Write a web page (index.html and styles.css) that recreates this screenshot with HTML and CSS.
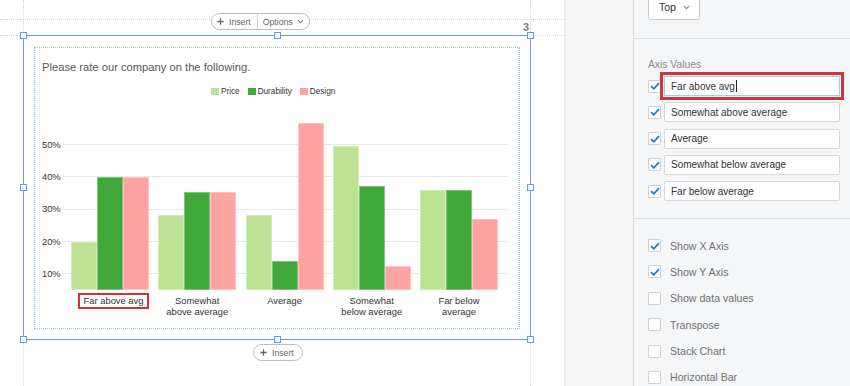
FILE: index.html
```html
<!DOCTYPE html>
<html>
<head>
<meta charset="utf-8">
<title>Chart question editor</title>
<link rel="stylesheet" href="styles.css">
</head>
<body>
<div class="app">
  <div class="canvas">
    <div class="guide guide-h guide-top"></div>
    <div class="guide guide-h guide-block"></div>
    <div class="guide guide-v guide-left"></div>
    <div class="guide guide-v guide-right"></div>

    <div class="toolbar">
      <div class="pill">
        <span class="pill-item pill-first">
          <svg class="plus" width="7" height="7" viewBox="0 0 7 7"><path d="M3.5 0.3V6.7M0.3 3.5H6.7"/></svg>
          Insert
        </span>
        <span class="pill-sep"></span>
        <span class="pill-item pill-last">
          Options
          <svg class="chev" width="7" height="5" viewBox="0 0 7 5"><path d="M1 1.2L3.5 3.7L6 1.2"/></svg>
        </span>
      </div>
    </div>

    <div class="block">
      <span class="handle h-tl"></span>
      <span class="handle h-tc"></span>
      <span class="handle h-tr"></span>
      <span class="handle h-ml"></span>
      <span class="handle h-mr"></span>
      <span class="handle h-bl"></span>
      <span class="handle h-bc"></span>
      <span class="handle h-br"></span>
      <span class="qnum">3</span>

      <div class="question">
        <div class="qtitle">Please rate our company on the following.</div>
        <div class="legend">
          <span class="leg-item"><span class="swatch c-price"></span>Price</span>
          <span class="leg-item"><span class="swatch c-dur"></span>Durability</span>
          <span class="leg-item"><span class="swatch c-design"></span>Design</span>
        </div>
        <div class="chart">
          <div class="grid">
            <div class="grow"><span class="ylabel">50%</span><span class="gline"></span></div>
            <div class="grow"><span class="ylabel">40%</span><span class="gline"></span></div>
            <div class="grow"><span class="ylabel">30%</span><span class="gline"></span></div>
            <div class="grow"><span class="ylabel">20%</span><span class="gline"></span></div>
            <div class="grow"><span class="ylabel">10%</span><span class="gline"></span></div>
          </div>
          <div class="bars">
            <div class="group">
              <span class="bar c-price" style="height:48px"></span>
              <span class="bar c-dur" style="height:113px"></span>
              <span class="bar c-design" style="height:113px"></span>
            </div>
            <div class="group">
              <span class="bar c-price" style="height:75px"></span>
              <span class="bar c-dur" style="height:98px"></span>
              <span class="bar c-design" style="height:98px"></span>
            </div>
            <div class="group">
              <span class="bar c-price" style="height:75px"></span>
              <span class="bar c-dur" style="height:29px"></span>
              <span class="bar c-design" style="height:167px"></span>
            </div>
            <div class="group">
              <span class="bar c-price" style="height:144px"></span>
              <span class="bar c-dur" style="height:104px"></span>
              <span class="bar c-design" style="height:24px"></span>
            </div>
            <div class="group">
              <span class="bar c-price" style="height:100px"></span>
              <span class="bar c-dur" style="height:100px"></span>
              <span class="bar c-design" style="height:71px"></span>
            </div>
          </div>
        </div>
        <div class="xlabels">
          <div class="xlabel"><span class="xlabel-edit">Far above avg</span></div>
          <div class="xlabel">Somewhat<br>above average</div>
          <div class="xlabel">Average</div>
          <div class="xlabel">Somewhat<br>below average</div>
          <div class="xlabel">Far below<br>average</div>
        </div>
      </div>
    </div>

    <div class="bottom-bar">
      <div class="pill">
        <span class="pill-item pill-solo">
          <svg class="plus" width="7" height="7" viewBox="0 0 7 7"><path d="M3.5 0.3V6.7M0.3 3.5H6.7"/></svg>
          Insert
        </span>
      </div>
    </div>
  </div>

  <div class="strip"></div>

  <div class="panel">
    <div class="panel-top">
      <div class="dropdown">
        <span>Top</span>
        <svg class="chev dd-chev" width="7" height="5" viewBox="0 0 7 5"><path d="M1 1.2L3.5 3.7L6 1.2"/></svg>
      </div>
    </div>

    <div class="axis-section">
      <div class="section-label">Axis Values</div>
      <div class="axis-rows">
        <div class="axis-row">
          <span class="cb"><svg width="10" height="8" viewBox="0 0 10 8"><path d="M1 4.2L3.8 6.8L9 1.2"/></svg></span>
          <div class="field focused">Far above avg<span class="caret"></span></div>
        </div>
        <div class="axis-row">
          <span class="cb"><svg width="10" height="8" viewBox="0 0 10 8"><path d="M1 4.2L3.8 6.8L9 1.2"/></svg></span>
          <div class="field">Somewhat above average</div>
        </div>
        <div class="axis-row">
          <span class="cb"><svg width="10" height="8" viewBox="0 0 10 8"><path d="M1 4.2L3.8 6.8L9 1.2"/></svg></span>
          <div class="field">Average</div>
        </div>
        <div class="axis-row">
          <span class="cb"><svg width="10" height="8" viewBox="0 0 10 8"><path d="M1 4.2L3.8 6.8L9 1.2"/></svg></span>
          <div class="field">Somewhat below average</div>
        </div>
        <div class="axis-row">
          <span class="cb"><svg width="10" height="8" viewBox="0 0 10 8"><path d="M1 4.2L3.8 6.8L9 1.2"/></svg></span>
          <div class="field">Far below average</div>
        </div>
      </div>
    </div>

    <div class="options-section">
      <div class="opt"><span class="cb"><svg width="10" height="8" viewBox="0 0 10 8"><path d="M1 4.2L3.8 6.8L9 1.2"/></svg></span>Show X Axis</div>
      <div class="opt"><span class="cb"><svg width="10" height="8" viewBox="0 0 10 8"><path d="M1 4.2L3.8 6.8L9 1.2"/></svg></span>Show Y Axis</div>
      <div class="opt"><span class="cb"></span>Show data values</div>
      <div class="opt"><span class="cb"></span>Transpose</div>
      <div class="opt"><span class="cb"></span>Stack Chart</div>
      <div class="opt"><span class="cb"></span>Horizontal Bar</div>
    </div>
  </div>
</div>
</body>
</html>
```

FILE: styles.css
```css
* { box-sizing: border-box; }
html, body { margin: 0; padding: 0; }
body {
  width: 850px;
  height: 386px;
  overflow: hidden;
  background: #fff;
  font-family: "Liberation Sans", Arial, sans-serif;
}
.app { display: flex; height: 386px; }

/* ---------- canvas ---------- */
.canvas {
  position: relative;
  width: 564px;
  flex: none;
  background: #fff;
  overflow: hidden;
}
.guide { position: absolute; }
.guide-h { left: 0; right: 0; height: 0; border-top: 1px dotted #d6d6d6; }
.guide-top { top: 19px; }
.guide-block { top: 35px; }
.guide-v { top: 0; bottom: 0; width: 0; border-left: 1px dotted #d6d6d6; }
.guide-left { left: 23px; }
.guide-right { left: 530px; }

.toolbar {
  height: 35px;
  padding: 13px 0 0 211px;
  display: flex;
  align-items: flex-start;
}
.pill {
  position: relative;
  display: flex;
  align-items: stretch;
  height: 17px;
  border: 1px solid #bdbdbd;
  border-radius: 9px;
  background: #fff;
  font-size: 8.7px;
  color: #666;
}
.pill-item { display: flex; align-items: center; }
.pill-first { padding: 0 6px 0 5px; gap: 5px; }
.pill-last { padding: 0 5px 0 5px; gap: 4px; }
.pill-solo { padding: 0 8px 0 6px; gap: 5px; }
.pill-sep { width: 1px; background: #cfcfcf; }
.plus path { stroke: #666; stroke-width: 1.3; fill: none; }
.chev path { stroke: #888; stroke-width: 1.1; fill: none; }

.block {
  position: relative;
  margin-left: 23px;
  width: 508px;
  height: 305px;
  border: 1px solid #5d9df5;
  background: #fff;
}
.handle {
  position: absolute;
  width: 7px;
  height: 7px;
  background: #fff;
  border: 1px solid #5d9df5;
}
.h-tl { left: -4px; top: -4px; }
.h-tc { left: calc(50% - 3.5px); top: -4px; }
.h-tr { right: -4px; top: -4px; }
.h-ml { left: -4px; top: calc(50% - 3.5px); }
.h-mr { right: -4px; top: calc(50% - 3.5px); }
.h-bl { left: -4px; bottom: -4px; }
.h-bc { left: calc(50% - 3.5px); bottom: -4px; }
.h-br { right: -4px; bottom: -4px; }
.qnum {
  position: absolute;
  right: 1px;
  top: -14px;
  font-size: 11px;
  line-height: 11px;
  font-weight: bold;
  color: #7d7d7d;
}

.question {
  margin: 11px 0 0 10px;
  width: 486px;
  height: 282px;
  border: 1px dotted #8ec4ec;
}
.qtitle {
  margin: 12px 0 0 7px;
  font-size: 11.2px;
  line-height: 14px;
  color: #575757;
}
.legend {
  display: flex;
  align-items: center;
  height: 10px;
  margin: 12px 0 0 176px;
  gap: 8px;
  font-size: 8.2px;
  color: #333;
}
.leg-item { display: flex; align-items: center; gap: 2px; }
.swatch { width: 8px; height: 7px; display: inline-block; }
.c-price { background: #bce394; }
.c-dur { background: #3ea839; }
.c-design { background: #fea3a2; }

.chart {
  display: grid;
  margin: 17px 0 0 7px;
  width: 466px;
  height: 177px;
}
.grid {
  grid-area: 1 / 1;
  display: flex;
  flex-direction: column;
  justify-content: flex-end;
}
.grow { flex: none; height: 32.3px; display: flex; align-items: center; }
.ylabel { width: 21px; font-size: 9.3px; color: #333; }
.gline { flex: 1; height: 1px; background: #e8e8e8; }
.bars {
  grid-area: 1 / 1;
  display: flex;
  align-items: flex-end;
  padding-left: 29px;
  gap: 9.25px;
}
.group { display: flex; align-items: flex-end; width: 78px; }
.bar {
  width: 26px;
  box-shadow: inset 0 0 0 1px rgba(255, 255, 255, 0.35);
}

.xlabels {
  display: flex;
  margin-top: 2px;
  padding-left: 36px;
  gap: 9.25px;
}
.xlabel {
  width: 78px;
  flex: none;
  text-align: center;
  padding-top: 3px;
  font-size: 9.4px;
  line-height: 11px;
  color: #333;
  white-space: nowrap;
}
.xlabel-edit {
  display: inline-block;
  margin: -3px 0 0 7px;
  padding: 0 3.5px;
  border: 2px solid #d0343a;
  line-height: 12px;
  background: #fff;
}

.bottom-bar {
  margin-top: 4px;
  padding-left: 253px;
  display: flex;
}

/* ---------- strip ---------- */
.strip {
  width: 69px;
  flex: none;
  background: #f7f7f7;
  box-shadow: inset 3px 0 3px -2px rgba(0, 0, 0, 0.09);
}

/* ---------- panel ---------- */
.panel {
  flex: 1;
  border-left: 1px solid #dadada;
  background: #f5f6f8;
  color: #333;
}
.panel-top {
  display: flex;
  align-items: flex-start;
  height: 39px;
  border-bottom: 1px solid #e0e0e0;
  padding-left: 14px;
}
.dropdown {
  margin-top: -6px;
  width: 52px;
  height: 26px;
  border: 1px solid #c9c9c9;
  border-radius: 3px;
  background: #fff;
  display: flex;
  align-items: center;
  padding-left: 10px;
  gap: 7px;
  font-size: 10.5px;
  color: #333;
}
.dd-chev { margin-top: 1px; }

.axis-section {
  height: 180px;
  padding: 20px 0 0 14px;
  border-bottom: 1px solid #e0e0e0;
}
.section-label {
  font-size: 10.3px;
  line-height: 12px;
  color: #8a8a8a;
}
.axis-rows {
  margin-top: 5px;
  display: flex;
  flex-direction: column;
  gap: 6.25px;
}
.axis-row { display: flex; align-items: center; gap: 3px; height: 20px; }
.cb {
  width: 13px;
  height: 13px;
  flex: none;
  border: 1px solid #d0d0d0;
  border-radius: 1px;
  background: #fff;
  display: flex;
  align-items: center;
  justify-content: center;
}
.cb path { stroke: #1f7bd2; stroke-width: 1.8; fill: none; }
.field {
  width: 176px;
  height: 20px;
  border: 1px solid #d6d6d6;
  border-radius: 2px;
  background: #fff;
  padding-left: 6px;
  display: flex;
  align-items: center;
  font-size: 10px;
  color: #333;
}
.field.focused {
  border-color: #a9c9ee;
  border-radius: 0;
  outline: 3px solid #d2343b;
  outline-offset: 1px;
}
.caret { display: inline-block; width: 1px; height: 12px; background: #222; margin-left: 1px; }

.options-section {
  padding: 20px 0 0 14px;
  display: flex;
  flex-direction: column;
  gap: 13.4px;
}
.opt {
  display: flex;
  align-items: center;
  gap: 9px;
  height: 13px;
  font-size: 10.6px;
  color: #707070;
}
```
